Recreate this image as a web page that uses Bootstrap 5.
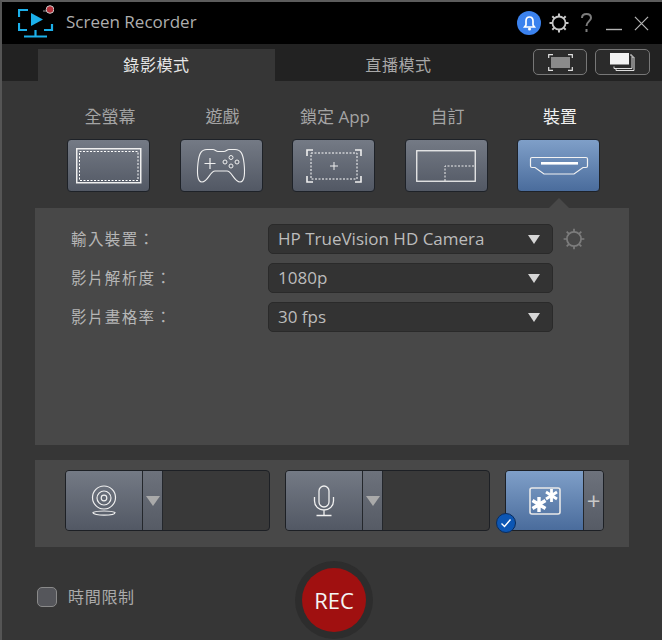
<!DOCTYPE html>
<html lang="zh-Hant"><head><meta charset="utf-8">
<title>Screen Recorder</title>
<link href="https://cdn.jsdelivr.net/npm/bootstrap@5.3.0/dist/css/bootstrap.min.css" rel="stylesheet">
<style>
html,body{margin:0;background:#363636;}
body{width:662px;height:640px;overflow:hidden;font-family:"Open Sans","Noto Sans CJK TC",sans-serif;color:#b4b4b4;}
svg{display:block;}
.shell{width:662px;height:640px;border-top:2px solid #5c5c5c;border-left:2px solid #555;background:#363636;}
.titlebar{height:42px;background:#000;padding-left:16px;}
.apptitle{font-size:17px;color:#aeaeae;margin-left:12px;margin-top:-2px;}
.winctl{margin-left:auto;padding-right:13px;}
.bellcirc{width:24px;height:24px;border-radius:50%;background:#3b82ee;margin-right:7px;}
.helpicon{margin-left:11px;}
.minicon{margin-left:14px;}
.closeicon{margin-left:12px;}
.tabbar{height:37px;background:#222;padding:5px 0 0 36px;}
.modetab{height:32px;font-size:16px;color:#a8a8a8;letter-spacing:.6px;}
.modetab.first{width:237px;background:#363636;color:#e6e6e6;}
.modetab.second{width:250px;padding-right:3px;}
.viewbtn{width:54px;height:26px;border:1px solid #777;border-radius:5px;background:#2b2b2b;margin-left:8px;}
.viewbtn+.viewbtn{width:55px;}
.tiles{padding:25px 30px 0 65px;height:127px;gap:29.5px;}
.tilecol{width:83px;}
.tilelabel{font-size:17px;line-height:22px;color:#a4a4a4;height:33px;white-space:nowrap;padding-left:3px;}
.tilelabel.on{color:#f0f0f0;}
.tile{width:83px;height:53px;border:1px solid #1e2228;border-radius:4px;background:linear-gradient(#747a85,#525864);}
.tile.on{background:linear-gradient(#7f9fc8,#4a6c9c);}
.pointer{width:0;height:0;border-left:10px solid transparent;border-right:10px solid transparent;border-bottom:10px solid #484848;margin-top:6px;}
.panel{margin-left:33px;width:594px;background:#484848;}
.panel.setup{height:237px;padding:16px 0 0 36px;}
.setrow{height:30px;margin-bottom:9px;}
.setlabel{width:197px;font-size:15.5px;color:#b6b6b6;letter-spacing:1.4px;padding-top:2px;}
.dropbox{width:285px;height:30px;background:#333;border:1px solid #2a2a2a;border-radius:5px;font-size:17px;color:#bcbcbc;padding:0 12px 0 9px;}
.devicegear{margin-left:9px;}
.caret{width:0;height:0;border-left:6px solid transparent;border-right:6px solid transparent;border-top:9px solid #d6d6d6;}
.caret.small{border-left-width:7px;border-right-width:7px;border-top-width:10px;border-top-color:#aaa;}
.panel.devices{height:87px;margin-top:15px;padding:10px 0 0 30px;}
.devgroup{width:205px;height:61px;margin-right:15px;border:1px solid #1d2025;border-radius:4px;overflow:hidden;background:#393939;}
.devmain{width:77px;background:linear-gradient(#747a85,#525864);border-right:1px solid #24272c;}
.devmain.on{background:linear-gradient(#7f9fc8,#4a6c9c);}
.devdrop{width:20px;background:linear-gradient(#6d727c,#565b65);border-right:1px solid #24272c;}
.fxgroup{width:99px;height:61px;position:relative;}
.fxbox{width:100%;height:100%;border:1px solid #1d2025;border-radius:4px;overflow:hidden;}
.fxmain{width:78px;}
.fxplus{flex:1;background:linear-gradient(#6d727c,#565b65);color:#c8c8c8;font-size:24px;line-height:1;}
.checkbadge{position:absolute;left:-9px;bottom:-2px;width:20px;height:20px;border-radius:50%;background:#0c56b4;border:1px solid #0a2c5c;}
.footerrow{height:93px;padding-left:35px;position:relative;}
.limitbox{width:20px;height:20px;border:1px solid #8a8a8a;border-radius:5px;background:#55565b;margin-top:40px;}
.limitlabel{font-size:16px;color:#aaa;margin-left:11px;margin-top:38px;letter-spacing:.7px;line-height:24px;}
.recring{position:absolute;left:293px;top:14px;width:78px;height:78px;border-radius:50%;background:#2d2d2d;}
.recbtn{width:64px;height:64px;border-radius:50%;background:#a01010;color:#f4f4f4;font-size:22px;}
</style></head>
<body>
<div class="shell">
  <div class="titlebar d-flex align-items-center">
    <svg width="36" height="36" viewBox="0 0 36 36" fill="none">
      <path d="M1 12V5H10M1 18V25H9M34 19V25H26" stroke="#1cb0ea" stroke-width="2.2"/>
      <path d="M13 8V21L25 14.5Z" fill="#1cb0ea"/>
      <path d="M17.5 25V31M6 31.5H29" stroke="#1cb0ea" stroke-width="2.2"/>
      <path d="M25 6H29" stroke="#999" stroke-width="1"/>
      <circle cx="32" cy="4.5" r="3.8" fill="#b5303a" stroke="#ccc" stroke-width="1"/>
    </svg>
    <span class="apptitle">Screen Recorder</span>
    <div class="winctl d-flex align-items-center">
      <div class="bellcirc d-flex align-items-center justify-content-center">
        <svg width="15" height="15" viewBox="0 0 15 15"><path d="M7.5 1C5 1 4 3 4 5V9L2.6 11H12.4L11 9V5C11 3 10 1 7.5 1Z" fill="none" stroke="#fff" stroke-width="1.7"/><circle cx="7.5" cy="13" r="1.5" fill="#fff"/></svg>
      </div>
      <svg width="22" height="22" viewBox="0 0 22 22" fill="none" stroke="#c8c8c8"><circle cx="11" cy="11" r="6.5" stroke-width="1.8"/><path d="M11 1.5V4.5M11 17.5V20.5M1.5 11H4.5M17.5 11H20.5M4.3 4.3L6.4 6.4M15.6 15.6L17.7 17.7M4.3 17.7L6.4 15.6M15.6 6.4L17.7 4.3" stroke-width="2"/></svg>
      <svg class="helpicon" width="11" height="20" viewBox="0 0 11 20" fill="none" stroke="#7c7c7c" stroke-width="2"><path d="M1 5C1 2.5 3 1 5.5 1S10 2.5 10 5C10 8 5.5 8.5 5.5 13"/><path d="M5.5 16V19"/></svg>
      <svg class="minicon" width="16" height="20" viewBox="0 0 16 20"><path d="M0 16.5H16" stroke="#b4b4b4" stroke-width="1.4"/></svg>
      <svg class="closeicon" width="15" height="15" viewBox="0 0 16 16"><path d="M1 1L15 15M15 1L1 15" stroke="#b4b4b4" stroke-width="1.3"/></svg>
    </div>
  </div>
  <div class="tabbar d-flex">
    <div class="modetab first d-flex align-items-center justify-content-center">錄影模式</div>
    <div class="modetab second d-flex align-items-center justify-content-center">直播模式</div>
    <button type="button" class="viewbtn p-0 d-flex align-items-center justify-content-center" aria-label="全螢幕">
      <svg width="25" height="17" viewBox="0 0 25 17" fill="none"><rect x="3" y="3" width="19" height="11" fill="#8a8a8a"/><path d="M.7 4V.7H5M20 .7H24.3V4M.7 13V16.3H5M20 16.3H24.3V13" stroke="#e0e0e0" stroke-width="1.2"/></svg>
    </button>
    <button type="button" class="viewbtn p-0 d-flex align-items-center justify-content-center" aria-label="視窗">
      <svg width="25" height="18" viewBox="0 0 25 18"><path d="M22 4H24V17.5H6V15.5" fill="none" stroke="#ddd" stroke-width="1"/><path d="M20 2H22V15.5H4V13.5" fill="none" stroke="#ddd" stroke-width="1"/><rect x="0" y="0" width="19" height="11.5" fill="#f2f2f2"/></svg>
    </button>
  </div>
  <div class="tiles d-flex">
    <div class="tilecol text-center">
      <div class="tilelabel">全螢幕</div>
      <div class="tile d-flex align-items-center justify-content-center">
        <svg width="66" height="36" viewBox="0 0 66 36" fill="none"><rect x=".75" y=".75" width="64" height="34" stroke="#eee" stroke-width="1.5"/><rect x="3.5" y="3.5" width="58.5" height="29" stroke="#fff" stroke-dasharray="2 1.5"/></svg>
      </div>
    </div>
    <div class="tilecol text-center">
      <div class="tilelabel">遊戲</div>
      <div class="tile d-flex align-items-center justify-content-center">
        <svg width="50" height="36" viewBox="0 0 50 36" fill="none" stroke="#f0f0f0"><path d="M11 1.5H17C19 1.5 20 3.5 22 3.5H28C30 3.5 31 1.5 33 1.5H39C45 1.5 47 6 48 15C49 24 49 34 44 34C38 34 36 23 31 23H19C14 23 12 34 6 34C1 34 1 24 2 15C3 6 5 1.5 11 1.5Z" stroke-width="1.1"/><path d="M14 10V21M8.5 15.5H19.5" stroke-width="1.2"/><circle cx="35" cy="9.5" r="2"/><circle cx="29" cy="14" r="2"/><circle cx="41" cy="14" r="2"/><circle cx="35" cy="18" r="2"/></svg>
      </div>
    </div>
    <div class="tilecol text-center">
      <div class="tilelabel">鎖定 App</div>
      <div class="tile d-flex align-items-center justify-content-center">
        <svg width="56" height="34" viewBox="0 0 56 34" fill="none"><path d="M1 7V1H7M49 1H55V7M1 27V33H7M49 33H55V27" stroke="#eee" stroke-width="1.6"/><rect x="5" y="4" width="46" height="26" stroke="#fff" stroke-dasharray="2 1.5"/><path d="M28 13V21M24 17H32" stroke="#eee"/></svg>
      </div>
    </div>
    <div class="tilecol text-center">
      <div class="tilelabel">自訂</div>
      <div class="tile d-flex align-items-center justify-content-center">
        <svg width="60" height="32" viewBox="0 0 60 32" fill="none"><rect x=".75" y=".75" width="58.5" height="30.5" stroke="#eee" stroke-width="1.3"/><path d="M29 31V16H59" stroke="#eee" stroke-dasharray="2 1.5"/></svg>
      </div>
    </div>
    <div class="tilecol text-center d-flex flex-column align-items-center">
      <div class="tilelabel on">裝置</div>
      <div class="tile on d-flex align-items-center justify-content-center">
        <svg width="60" height="20" viewBox="0 0 60 20" fill="none"><path d="M3 1.5H57C58 1.5 58.5 2 58.5 3V10C58.5 11 58 11.5 57 11.5H54L45 18H15L6 11.5H3C2 11.5 1.5 11 1.5 10V3C1.5 2 2 1.5 3 1.5Z" stroke="#f2f2f2" stroke-width="1.2"/><rect x="12" y="6" width="37" height="2.6" fill="#fff"/></svg>
      </div>
      <div class="pointer"></div>
    </div>
  </div>
  <div class="panel setup">
    <div class="setrow d-flex align-items-center">
      <div class="setlabel">輸入裝置：</div>
      <div class="dropbox d-flex align-items-center justify-content-between"><span>HP TrueVision HD Camera</span><span class="caret"></span></div>
      <svg class="devicegear" width="24" height="24" viewBox="0 0 22 22" fill="none" stroke="#7c7c7c"><circle cx="11" cy="11" r="6.5" stroke-width="1.6"/><path d="M11 1.5V4.5M11 17.5V20.5M1.5 11H4.5M17.5 11H20.5M4.3 4.3L6.4 6.4M15.6 15.6L17.7 17.7M4.3 17.7L6.4 15.6M15.6 6.4L17.7 4.3" stroke-width="1.6"/></svg>
    </div>
    <div class="setrow d-flex align-items-center">
      <div class="setlabel">影片解析度：</div>
      <div class="dropbox d-flex align-items-center justify-content-between"><span>1080p</span><span class="caret"></span></div>
    </div>
    <div class="setrow d-flex align-items-center">
      <div class="setlabel">影片畫格率：</div>
      <div class="dropbox d-flex align-items-center justify-content-between"><span>30 fps</span><span class="caret"></span></div>
    </div>
  </div>
  <div class="panel devices d-flex">
    <div class="devgroup d-flex">
      <div class="devmain d-flex align-items-center justify-content-center">
        <svg width="26" height="32" viewBox="0 0 26 32" fill="none" stroke="#f0f0f0"><circle cx="13" cy="12.5" r="11.5" stroke-width="1.2"/><circle cx="13" cy="13" r="7" stroke-width="1.2"/><circle cx="13" cy="13" r="2.8" stroke-width="1.2"/><path d="M2 27.5C6 25.5 20 25.5 24 27.5C24 31 2 31 2 27.5Z" stroke-width="1.2"/></svg>
      </div>
      <div class="devdrop d-flex align-items-center justify-content-center"><span class="caret small"></span></div>
    </div>
    <div class="devgroup d-flex">
      <div class="devmain d-flex align-items-center justify-content-center">
        <svg width="22" height="32" viewBox="0 0 22 32" fill="none" stroke="#f0f0f0" stroke-width="1.3"><rect x="6" y="1" width="10" height="21" rx="5"/><path d="M1.5 12V16C1.5 21 5.5 25 11 25S20.5 21 20.5 16V12M11 25V30.5M3.5 30.5H18.5"/></svg>
      </div>
      <div class="devdrop d-flex align-items-center justify-content-center"><span class="caret small"></span></div>
    </div>
    <div class="fxgroup">
      <div class="fxbox d-flex">
        <div class="devmain on fxmain d-flex align-items-center justify-content-center">
          <svg width="32" height="28" viewBox="0 0 32 28" fill="none"><rect x="1" y="1" width="30" height="26" rx="2" stroke="#e8e8e8" stroke-width="1.6"/><path d="M10 10V25M3.5 13.5L16.5 21.5M16.5 13.5L3.5 21.5" stroke="#fff" stroke-width="3.4"/><path d="M22.5 2V15M17 5L28 12M28 5L17 12" stroke="#fff" stroke-width="2.8"/></svg>
        </div>
        <div class="fxplus d-flex align-items-center justify-content-center">+</div>
      </div>
      <div class="checkbadge d-flex align-items-center justify-content-center">
        <svg width="12" height="12" viewBox="0 0 12 12" fill="none"><path d="M1.5 6.5L4.5 9.5L10.5 2.5" stroke="#fff" stroke-width="1.4"/></svg>
      </div>
    </div>
  </div>
  <div class="footerrow d-flex">
    <div class="limitbox"></div>
    <div class="limitlabel">時間限制</div>
    <div class="recring d-flex align-items-center justify-content-center">
      <div class="recbtn d-flex align-items-center justify-content-center">REC</div>
    </div>
  </div>
</div>
</body></html>
